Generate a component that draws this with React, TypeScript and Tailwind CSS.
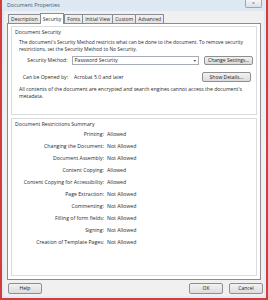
import React from 'react';

const tabs = ['Description', 'Security', 'Fonts', 'Initial View', 'Custom', 'Advanced'];

const restrictions: [string, string][] = [
  ['Printing', 'Allowed'],
  ['Changing the Document', 'Not Allowed'],
  ['Document Assembly', 'Not Allowed'],
  ['Content Copying', 'Allowed'],
  ['Content Copying for Accessibility', 'Allowed'],
  ['Page Extraction', 'Not Allowed'],
  ['Commenting', 'Not Allowed'],
  ['Filling of form fields', 'Not Allowed'],
  ['Signing', 'Not Allowed'],
  ['Creation of Template Pages', 'Not Allowed'],
];

function WinButton({ label, className = '' }: { label: string; className?: string }) {
  return (
    <div
      className={`flex items-center justify-center rounded-[2px] border border-[#8e8f8f] bg-gradient-to-b from-[#f2f2f2] to-[#dcdcdc] text-[#222] ${className}`}
    >
      {label}
    </div>
  );
}

export default function App() {
  return (
    <div
      className="w-[268px] h-[300px] overflow-hidden bg-[#d23c3c] p-[2px] pt-0 text-[5px] leading-none text-[#2a2a2a]"
      style={{ fontFamily: '"Open Sans", "Noto Sans", sans-serif' }}
    >
      <div className="flex h-full flex-col bg-gradient-to-b from-[#dde8f2] via-[#eef3f8] to-[#e4eaf1] px-[2px] pb-[2px]">
        {/* title bar */}
        <div className="flex h-[11px] items-start justify-between">
          <span className="pl-[3px] pt-[3px] text-[5.3px] text-[#4a5868]">Document Properties</span>
          <div className="mr-[2px] flex h-[8px] w-[17px] items-center justify-center rounded-b-[2px] border border-t-0 border-[#9aa7b6] bg-gradient-to-b from-[#f4f6f9] to-[#d9e0e8] text-[5px] text-[#4b5563]">
            ×
          </div>
        </div>

        <div className="flex flex-1 flex-col bg-[#f0f0f0] px-[3px] pt-[2px]">
          {/* tabs */}
          <div className="flex h-[10px] items-end pl-[1px]">
            {tabs.map((t) => {
              const sel = t === 'Security';
              return (
                <div
                  key={t}
                  className={
                    sel
                      ? 'relative z-10 -mb-px flex h-[11px] items-center border border-b-0 border-[#898c95] bg-white px-[2px] text-[5px]'
                      : 'flex h-[9px] items-center border border-b-0 border-r-0 border-[#898c95] bg-gradient-to-b from-[#f2f2f2] to-[#e3e3e3] px-[2px] text-[5px] last:border-r'
                  }
                >
                  {t}
                </div>
              );
            })}
          </div>

          {/* tab panel */}
          <div className="flex h-[257px] flex-col gap-[3px] border border-[#898c95] bg-white px-[3px] pt-[2px] pb-[3px]">
            <div className="flex h-[89px] flex-col border border-[#dcdcdc] px-[3px]">
              <div className="pt-[3px] text-[5.2px]">Document Security</div>
              <div className="mt-[4px] pl-[4px] pr-[2px] text-[4.95px] leading-[7px]">
                The document's Security Method restricts what can be done to the document. To remove security restrictions, set the Security Method to No Security.
              </div>
              <div className="mt-[3px] flex items-center">
                <span className="w-[53px] text-right text-[5.1px]">Security Method:</span>
                <div className="ml-[4px] flex h-[9px] w-[129px] items-center justify-between border border-[#a5acb5] bg-white pl-[2px] pr-[2px] text-[5.1px]">
                  <span>Password Security</span>
                  <span className="text-[3.5px] text-[#333]">▼</span>
                </div>
                <WinButton label="Change Settings..." className="ml-[5px] h-[9px] w-[49px] text-[5px]" />
              </div>
              <div className="mt-[7px] flex items-center">
                <span className="w-[53px] text-right text-[5.1px]">Can be Opened by:</span>
                <span className="ml-[6px] text-[5.1px]">Acrobat 5.0 and later</span>
                <WinButton label="Show Details..." className="ml-auto mr-[2px] h-[10px] w-[49px] text-[5px]" />
              </div>
              <div className="mt-[4px] px-[4px] text-[5.1px] leading-[7px]">
                All contents of the document are encrypted and search engines cannot access the document's metadata.
              </div>
            </div>

            <div className="flex flex-1 flex-col border border-[#dcdcdc] px-[3px]">
              <div className="pt-[3px] text-[5.2px]">Document Restrictions Summary</div>
              <div className="mt-[5px] flex flex-col gap-[6.8px]">
                {restrictions.map(([k, v]) => (
                  <div key={k} className="flex items-center text-[5.2px]">
                    <span className="w-[89px] text-right">{k}:</span>
                    <span className="ml-[3px]">{v}</span>
                  </div>
                ))}
              </div>
            </div>
          </div>

          {/* footer buttons */}
          <div className="flex flex-1 items-center justify-between pl-[1px] mr-[-2px]">
            <WinButton label="Help" className="h-[11px] w-[34px] text-[5px]" />
            <div className="flex gap-[6px]">
              <WinButton label="OK" className="h-[11px] w-[34px] text-[5px]" />
              <WinButton label="Cancel" className="h-[11px] w-[34px] text-[5px]" />
            </div>
          </div>
        </div>
      </div>
    </div>
  );
}
